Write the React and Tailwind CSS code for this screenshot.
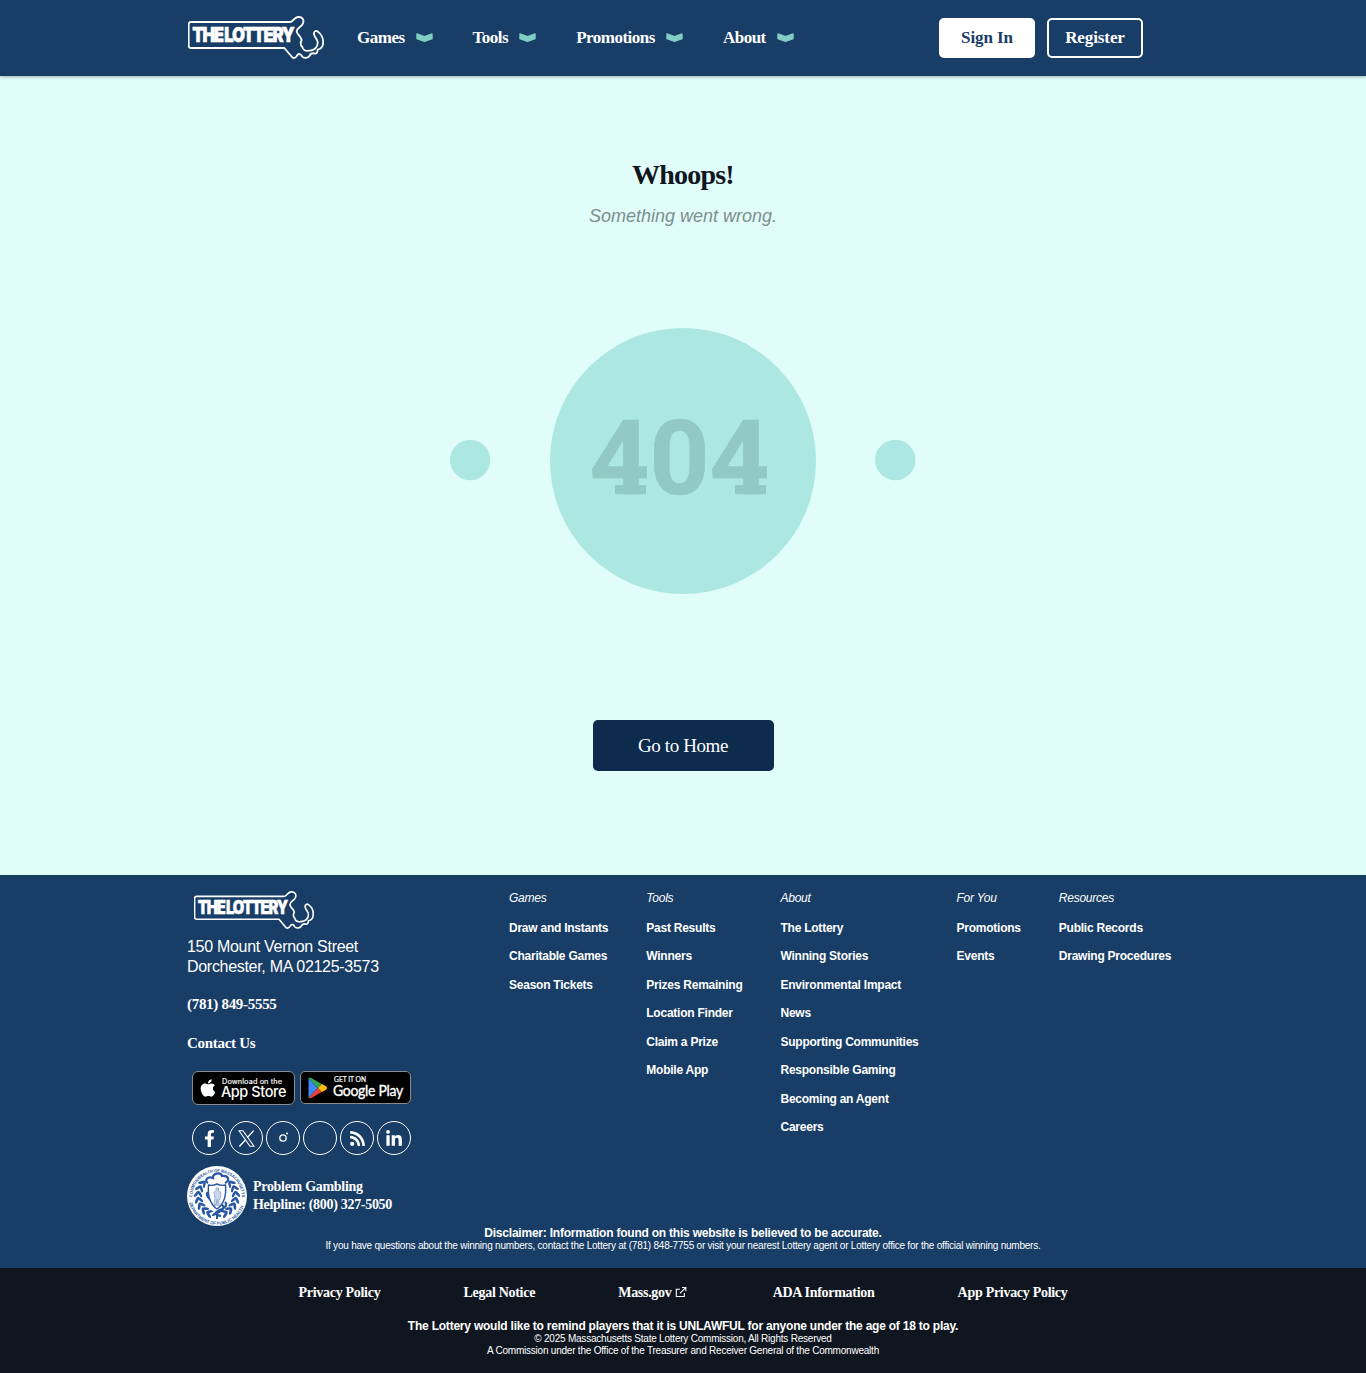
import React from "react";
import { FaFacebookF, FaLinkedinIn, FaApple, FaRss } from "react-icons/fa";

const serif = "font-['Liberation_Serif',serif]";

function LotteryLogo({ className }) {
  return (
    <svg viewBox="24 32 408 129" className={className} fill="none" role="img" aria-label="The Lottery">
      <path
        d="M33 50H331C339 50 342 36 354 35C367 34 373 43 369 54C364 66 351 67 350 78C350 88 363 92 365 104C361 112 360 119 367 125C368 134 377 138 388 136C402 136 413 126 413 113C415 103 402 95 402 86C401 78 408 74 414 79C424 86 431 101 429 116C428 126 421 131 413 133C413 141 409 147 402 144C395 143 391 145 389 151C384 159 371 160 366 153C363 145 356 144 352 149C349 157 341 161 336 155L313 128H33Q26 128 26 121V57Q26 50 33 50Z"
        stroke="white"
        strokeWidth="5.5"
        strokeLinejoin="round"
      />
      <text
        x="37"
        y="109"
        fill="white"
        stroke="white"
        strokeWidth="1.5"
        fontFamily="Inter, sans-serif"
        fontWeight="900"
        fontSize="62"
        letterSpacing="-5"
        wordSpacing="-1"
        textLength="303"
        lengthAdjust="spacingAndGlyphs"
      >
        THE LOTTERY
      </text>
    </svg>
  );
}

function Chevron() {
  return (
    <svg viewBox="0 0 17 9" className="mt-[-0.5px] h-[9px] w-[17px]">
      <path d="M1 .9 8.5 3.7 16 .9V5.7L8.5 8.3 1 5.7Z" fill="#83cec4" stroke="#83cec4" strokeWidth="1.4" strokeLinejoin="round" />
    </svg>
  );
}

function AppStoreBadge() {
  return (
    <a href="#" className="flex h-[34px] w-[103px] items-center rounded-[6px] border border-[#8b8b8b] bg-black pl-[7px] text-white">
      <FaApple className="mt-[-1px] h-[20px] w-[16px]" />
      <svg viewBox="0 0 68 32" className="ml-[5px] h-8 w-[68px]" fill="white" fontFamily="Inter, sans-serif">
        <text x="1" y="11.5" fontSize="7" fontWeight="400" letterSpacing="0.1" stroke="white" strokeWidth=".15" textLength="60" lengthAdjust="spacingAndGlyphs">Download on the</text>
        <text x="0" y="25.3" fontSize="14.8" fontWeight="500" letterSpacing="-.4" textLength="65" lengthAdjust="spacingAndGlyphs">App Store</text>
      </svg>
    </a>
  );
}

function GooglePlayBadge() {
  return (
    <a href="#" className="flex h-[33px] w-[111px] items-center rounded-[5px] border border-[#8b8b8b] bg-black pl-[7px] text-white">
      <svg viewBox="0 0 20 22" className="h-[22px] w-5">
        <path d="M.5 1v20L10 11Z" fill="#4285f4" />
        <path d="M.5 1Q2 .2 3.3 1L14 7.2 10 11Z" fill="#34a853" />
        <path d="M.5 21Q2 21.7 3.3 21L14 14.8 10 11Z" fill="#ea4335" />
        <path d="M14 7 18.4 9.6Q20 11 18.4 12.4L14 15 10 11Z" fill="#fbbc04" />
      </svg>
      <svg viewBox="0 0 76 31" className="ml-[5px] h-[31px] w-[76px]" fill="white">
        <text x="1" y="9.8" fontFamily="Lato, sans-serif" fontSize="7" letterSpacing="0" stroke="white" strokeWidth=".2" textLength="32" lengthAdjust="spacingAndGlyphs">GET IT ON</text>
        <text x="0" y="24" fontFamily="Lato, sans-serif" fontSize="15" letterSpacing="-.3" stroke="white" strokeWidth=".35" textLength="70" lengthAdjust="spacingAndGlyphs">Google Play</text>
      </svg>
    </a>
  );
}

function XLogo() {
  return (
    <svg viewBox="0 0 17 17" className="size-[17px]" fill="none" stroke="white">
      <path d="M1 .8H5L16 16.2H12Z" strokeWidth="1.1" />
      <path d="M15.6.6 9.3 7.7M7.7 9.5 1.4 16.5" strokeWidth="1.3" />
    </svg>
  );
}

function InstagramMark() {
  return (
    <svg viewBox="0 0 12 12" className="mt-[-2px] size-3" fill="none">
      <circle cx="6" cy="7" r="3.2" stroke="white" strokeWidth="1.3" />
      <circle cx="10" cy="2.4" r="1" fill="white" />
    </svg>
  );
}

const leafAngles = [24, 42, 60, 78, 96, 114, 132];

function HealthSeal() {
  return (
    <svg viewBox="0 0 60 60" className="size-[60px] shrink-0">
      <defs>
        <path id="seal-top" d="M5.4 33A24.7 24.7 0 1 1 54.6 33" />
        <path id="seal-bottom" d="M2 36A28.6 28.6 0 0 0 58 36" />
      </defs>
      <circle cx="30" cy="30" r="30" fill="white" />
      <g fill="#2857a4" fontFamily="Liberation Sans, sans-serif" fontSize="4.4" fontWeight="700" letterSpacing="0">
        <text>
          <textPath href="#seal-top" startOffset="2" textLength="78" lengthAdjust="spacingAndGlyphs">COMMONWEALTH OF MASSACHUSETTS</textPath>
        </text>
        <text>
          <textPath href="#seal-bottom" startOffset="1" textLength="72" lengthAdjust="spacingAndGlyphs">DEPARTMENT OF PUBLIC HEALTH</textPath>
        </text>
      </g>
      <g fill="#2857a4">
        {leafAngles.map((a) => (
          <g key={a}>
            <g transform={`rotate(${a} 30 30)`}>
              <ellipse cx="30" cy="50.5" rx="3.7" ry="1.4" transform="rotate(35 30 50.5)" />
              <ellipse cx="30" cy="47" rx="3.5" ry="1.3" transform="rotate(-35 30 47)" />
            </g>
            <g transform={`rotate(${-a} 30 30)`}>
              <ellipse cx="30" cy="50.5" rx="3.7" ry="1.4" transform="rotate(-35 30 50.5)" />
              <ellipse cx="30" cy="47" rx="3.5" ry="1.3" transform="rotate(35 30 47)" />
            </g>
          </g>
        ))}
      </g>
      <ellipse cx="30" cy="27" rx="12.5" ry="19" fill="white" />
      <path d="M21 17C17 15 20 10 26 12C25 7 34 6 35 10C42 9 43 15 38 17M21 26C18 29 22 33 26 36S39 38 36 43S27 46 26 50M38 36C42 40 35 43 31 45S28 49 34 50" fill="none" stroke="#2857a4" strokeWidth="2.2" />
      <path d="M21.5 19Q26 20 30 18Q34 20 38.5 19Q40 36 30 43Q20 36 21.5 19Z" fill="white" stroke="#2857a4" strokeWidth="1.4" />
      <path d="M29 22h2.5v3l2.5 1.5-1 7h-1v6h-2v-6l-1 6h-2l1-7-1-6 2-2Z" fill="#c9d7ed" stroke="#6c8ec3" strokeWidth=".6" />
      <path d="M29 47h2v6h-2Z" fill="#2857a4" />
    </svg>
  );
}

function ExternalLink() {
  return (
    <svg viewBox="0 0 12 12" className="mt-[-2px] size-3" fill="none" stroke="white" strokeWidth="1.1">
      <path d="M5 3.3H1.3v7.2h8V7M7 1.5h3.8V5.3M10.6 1.7 5 7.3" />
    </svg>
  );
}

const navItems = ["Games", "Tools", "Promotions", "About"];

const footerColumns = [
  { title: "Games", links: ["Draw and Instants", "Charitable Games", "Season Tickets"] },
  { title: "Tools", links: ["Past Results", "Winners", "Prizes Remaining", "Location Finder", "Claim a Prize", "Mobile App"] },
  {
    title: "About",
    links: ["The Lottery", "Winning Stories", "Environmental Impact", "News", "Supporting Communities", "Responsible Gaming", "Becoming an Agent", "Careers"],
  },
  { title: "For You", links: ["Promotions", "Events"] },
  { title: "Resources", links: ["Public Records", "Drawing Procedures"] },
];

const socials = [
  { name: "Facebook", icon: <FaFacebookF className="mt-[1px] ml-[1px] size-[17px]" /> },
  { name: "X", icon: <XLogo /> },
  { name: "Instagram", icon: <InstagramMark /> },
  { name: "YouTube", icon: null },
  { name: "RSS", icon: <FaRss className="size-[17px]" /> },
  { name: "LinkedIn", icon: <FaLinkedinIn className="mt-[2px] size-[18px]" /> },
];

export default function App() {
  return (
    <div className="flex h-[1373px] w-[1366px] flex-col overflow-hidden bg-[#e1fdfa] font-['Liberation_Sans',Arial,sans-serif]">
      <header className="relative flex h-[76px] shrink-0 items-center bg-[#183d66] pr-[223px] pl-[188px] shadow-[0_1px_3px_rgba(0,0,0,0.3)]">
        <LotteryLogo className="mt-[-1px] h-[43px] w-[136px]" />
        <nav className={`ml-[33px] flex gap-10 text-[17px] font-bold tracking-[-0.5px] text-white ${serif}`}>
          {navItems.map((item) => (
            <a key={item} href="#" className="flex items-center gap-[11px]">
              {item}
              <Chevron />
            </a>
          ))}
        </nav>
        <div className={`ml-auto flex gap-3 text-[17px] font-bold tracking-[-0.1px] ${serif}`}>
          <button className="h-10 w-24 rounded-[5px] bg-white text-[#183d66]">Sign In</button>
          <button className="h-10 w-24 rounded-[5px] border-2 border-white text-white">Register</button>
        </div>
      </header>

      <main className="flex h-[799px] shrink-0 flex-col items-center">
        <h1 className={`mt-[79px] text-[28px] leading-10 font-bold tracking-[-0.8px] text-[#0f161f] ${serif}`}>Whoops!</h1>
        <p className="mt-[9px] text-lg leading-6 text-[#7b8f8e] italic">Something went wrong.</p>
        <svg viewBox="0 0 466 266" className="mt-[100px] h-[266px] w-[466px]">
          <g fill="#ace8e1">
            <circle cx="233" cy="133" r="133" />
            <circle cx="20.2" cy="132" r="20.2" />
            <circle cx="445.3" cy="132" r="20.2" />
          </g>
          <g fill="#92c9c4">
            <text x="139.4" y="166" fontFamily="Roboto, sans-serif" fontSize="104" fontWeight="700" stroke="#92c9c4" strokeWidth=".6" textLength="180" lengthAdjust="spacingAndGlyphs">
              404
            </text>
            <rect x="165" y="157" width="31" height="9.2" />
            <rect x="285" y="157" width="31" height="9.2" />
          </g>
        </svg>
        <a href="#" className={`mt-[126px] flex h-[51px] w-[181px] items-center justify-center rounded-[5px] bg-[#0c2b4d] pt-0.5 text-[19px] tracking-[-0.02em] text-white ${serif}`}>
          Go to Home
        </a>
      </main>

      <footer className="flex flex-1 flex-col text-white">
        <div className="flex h-[393px] flex-col bg-[#183d66]">
          <div className="flex h-[352px] pl-[187px]">
            <div className="flex w-[322px] flex-col pt-4 tracking-[-0.3px]">
              <LotteryLogo className="ml-[7px] h-[38px] w-[120px]" />
              <address className="mt-2 text-base leading-5 not-italic">
                150 Mount Vernon Street
                <br />
                Dorchester, MA 02125-3573
              </address>
              <a href="#" className={`mt-[17px] text-[15px] leading-5 font-bold ${serif}`}>(781) 849-5555</a>
              <a href="#" className={`mt-[19px] text-[15px] leading-5 font-bold ${serif}`}>Contact Us</a>
              <div className="mt-[18px] ml-[5px] flex gap-[5px]">
                <AppStoreBadge />
                <GooglePlayBadge />
              </div>
              <div className="mt-4 ml-[5px] flex gap-[3px]">
                {socials.map(({ name, icon }) => (
                  <a key={name} href="#" aria-label={name} className="flex size-[34px] items-center justify-center rounded-full border border-white">
                    {icon}
                  </a>
                ))}
              </div>
              <div className="mt-[11px] flex items-center gap-[6px]">
                <HealthSeal />
                <p className={`text-[14px] leading-[18px] font-bold ${serif}`}>
                  Problem Gambling
                  <br />
                  Helpline: (800) 327-5050
                </p>
              </div>
            </div>
            <div className="flex gap-[38px] pt-[15px] text-xs leading-4 tracking-[-0.02em]">
              {footerColumns.map(({ title, links }) => (
                <div key={title} className="flex flex-col">
                  <h2 className="italic">{title}</h2>
                  <ul className="mt-[13.6px] flex flex-col gap-[12.5px] font-bold whitespace-nowrap">
                    {links.map((link) => (
                      <li key={link}>
                        <a href="#">{link}</a>
                      </li>
                    ))}
                  </ul>
                </div>
              ))}
            </div>
          </div>
          <div className="text-center text-[10px] leading-3 tracking-[-0.22px]">
            <p className="text-xs leading-[13px] font-bold">Disclaimer: Information found on this website is believed to be accurate.</p>
            <p>If you have questions about the winning numbers, contact the Lottery at (781) 848-7755 or visit your nearest Lottery agent or Lottery office for the official winning numbers.</p>
          </div>
        </div>
        <div className="flex flex-1 flex-col bg-[#0f161f]">
          <div className={`mx-auto mt-[15px] flex w-[769px] justify-between text-[14px] leading-5 font-bold tracking-[-0.29px] ${serif}`}>
            <a href="#">Privacy Policy</a>
            <a href="#">Legal Notice</a>
            <a href="#" className="flex items-center gap-[3px] pr-[3px]">
              Mass.gov <ExternalLink />
            </a>
            <a href="#">ADA Information</a>
            <a href="#">App Privacy Policy</a>
          </div>
          <div className="mt-4 text-center text-[10px] leading-3 tracking-[-0.22px]">
            <p className="text-xs leading-[14px] font-bold">The Lottery would like to remind players that it is UNLAWFUL for anyone under the age of 18 to play.</p>
            <p>© 2025 Massachusetts State Lottery Commission, All Rights Reserved</p>
            <p>A Commission under the Office of the Treasurer and Receiver General of the Commonwealth</p>
          </div>
        </div>
      </footer>
    </div>
  );
}
